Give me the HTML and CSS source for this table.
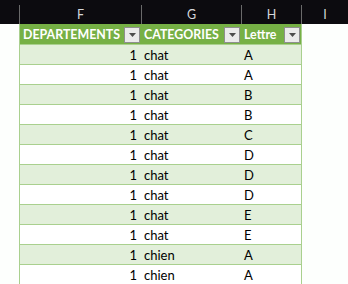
FILE: index.html
```html
<!DOCTYPE html>
<html>
<head>
<meta charset="utf-8">
<link rel="stylesheet" href="styles.css">
</head>
<body>
<div class="colbar">
  <div class="ch corner"></div>
  <div class="ch"><span>F</span></div>
  <div class="ch"><span>G</span></div>
  <div class="ch"><span>H</span></div>
  <div class="ch"><span>I</span></div>
</div>
<div class="sheet">
  <div class="gutter"></div>
  <div class="table">
    <div class="row head">
      <div class="cell"><span class="lbl">DEPARTEMENTS</span><span class="flt"><svg width="7" height="4" viewBox="0 0 7 4"><path d="M0 0h7L3.5 4z" fill="#4d4d4d"/></svg></span></div>
      <div class="cell"><span class="lbl">CATEGORIES</span><span class="flt"><svg width="7" height="4" viewBox="0 0 7 4"><path d="M0 0h7L3.5 4z" fill="#4d4d4d"/></svg></span></div>
      <div class="cell"><span class="lbl">Lettre</span><span class="flt"><svg width="7" height="4" viewBox="0 0 7 4"><path d="M0 0h7L3.5 4z" fill="#4d4d4d"/></svg></span></div>
    </div>
    <div class="row band"><div class="cell num">1</div><div class="cell">chat</div><div class="cell">A</div></div>
    <div class="row"><div class="cell num">1</div><div class="cell">chat</div><div class="cell">A</div></div>
    <div class="row band"><div class="cell num">1</div><div class="cell">chat</div><div class="cell">B</div></div>
    <div class="row"><div class="cell num">1</div><div class="cell">chat</div><div class="cell">B</div></div>
    <div class="row band"><div class="cell num">1</div><div class="cell">chat</div><div class="cell">C</div></div>
    <div class="row"><div class="cell num">1</div><div class="cell">chat</div><div class="cell">D</div></div>
    <div class="row band"><div class="cell num">1</div><div class="cell">chat</div><div class="cell">D</div></div>
    <div class="row"><div class="cell num">1</div><div class="cell">chat</div><div class="cell">D</div></div>
    <div class="row band"><div class="cell num">1</div><div class="cell">chat</div><div class="cell">E</div></div>
    <div class="row"><div class="cell num">1</div><div class="cell">chat</div><div class="cell">E</div></div>
    <div class="row band"><div class="cell num">1</div><div class="cell">chien</div><div class="cell">A</div></div>
    <div class="row"><div class="cell num">1</div><div class="cell">chien</div><div class="cell">A</div></div>
  </div>
  <div class="rest"></div>
</div>
</body>
</html>
```
FILE: styles.css
```css
html, body {
  margin: 0;
  padding: 0;
  background: #fdfffd;
  overflow: hidden;
}
body {
  width: 348px;
  height: 284px;
  font-family: Lato, "Open Sans", sans-serif;
}
.colbar {
  display: grid;
  grid-template-columns: 19px 122px 100px 60px 1fr;
  height: 24px;
  background: #0c0b0f;
}
.ch {
  align-self: end;
  height: 19px;
  border-left: 1px solid #6a6a6a;
  display: flex;
  align-items: center;
  justify-content: center;
  color: #d4d7db;
  font-size: 12.5px;
}
.ch.corner {
  border-left: none;
}
.sheet {
  display: grid;
  grid-template-columns: 19px 283px 1fr;
  height: 260px;
}
.table {
  border-left: 1px solid #a9d08e;
  border-right: 1px solid #a9d08e;
  background: #ffffff;
}
.row {
  display: grid;
  grid-template-columns: 121px 100px 60px;
  height: 19px;
  border-top: 1px solid #a9d08e;
  font-size: 13px;
  color: #000;
}
.row.head {
  border-top: none;
  height: 20px;
  background: #76b045;
  color: #fff;
  font-weight: 700;
  font-size: 12.4px;
}
.row.band {
  background: #e2efda;
}
.cell {
  display: flex;
  align-items: center;
  padding-left: 3px;
  white-space: nowrap;
}
.cell.num {
  justify-content: flex-end;
  padding-left: 0;
  padding-right: 4px;
}
.head .cell {
  justify-content: space-between;
  padding-right: 1px;
}
.head .lbl {
  padding-top: 1px;
}
.flt {
  width: 14px;
  height: 14px;
  background: #ebebeb;
  border: 1px solid #8f8f8f;
  display: flex;
  align-items: center;
  justify-content: center;
  margin-top: 2px;
}
.rest {
  background: #fdfffd;
}
```
